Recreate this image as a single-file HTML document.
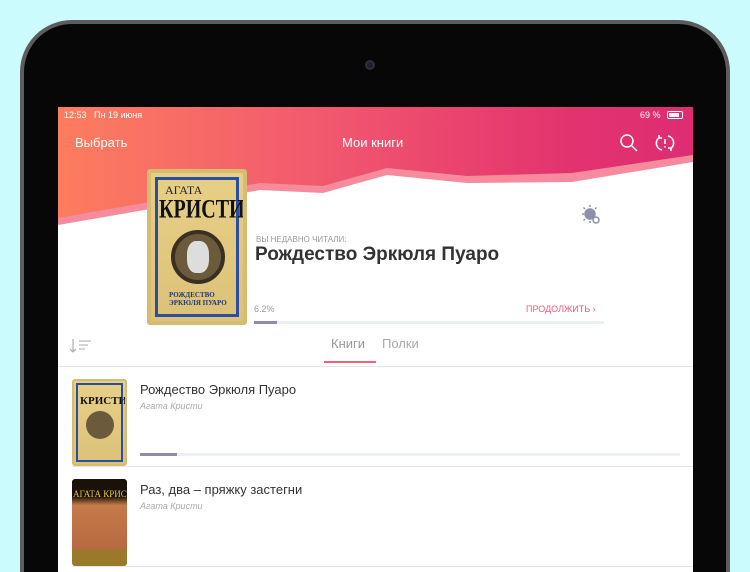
<!DOCTYPE html>
<html><head><meta charset="utf-8"><style>
*{margin:0;padding:0;box-sizing:border-box}
html,body{width:750px;height:572px;overflow:hidden}
body{background:#ccfbfd;font-family:"Liberation Sans","DejaVu Sans",sans-serif}
.wrap{position:relative;width:750px;height:572px;overflow:hidden;background:#ccfbfd}
.ipad{position:absolute;left:20px;top:20px;width:710px;height:552px;border-radius:52px 52px 0 0;background:#070707;border:4px solid #5c5c5e;border-bottom:none}
.cam{position:absolute;left:365px;top:60px;width:10px;height:10px;border-radius:50%;background:#1b2230;border:2px solid #2a2f3a}
.screen{position:absolute;left:58px;top:107px;width:635px;height:465px;background:#fff;overflow:hidden}
.grad{position:absolute;left:0;top:0;width:635px;height:130px;background:linear-gradient(90deg,#fd7d5e,#f25a6e 40%,#e3336f 80%,#de2d71)}
.t{position:absolute;white-space:nowrap}
.cover{position:absolute;background:linear-gradient(#e8cf86,#dcc279);border-radius:3px;overflow:hidden}
</style></head><body><div class="wrap">
<div class="ipad"></div>
<div class="cam"></div>
<div class="screen">
<div class="grad"></div>
<svg width="635" height="130" style="position:absolute;left:0;top:0">
<polygon points="0,111 202,76 265,79 329,61 409,69 514,66 635,48 635,130 0,130" fill="#f58b9c"/>
<polygon points="0,118 202,83 265,86 329,68 409,76 514,75 635,55 635,130 0,130" fill="#fff"/>
</svg>
<div class="t" style="left:6px;top:3px;font-size:9px;color:#fff">12:53&nbsp;&nbsp;&nbsp;Пн 19 июня</div>
<div class="t" style="left:582px;top:3px;font-size:9px;color:#fff">69 %</div>
<div style="position:absolute;left:609px;top:4px;width:16px;height:8px;border:1px solid #fff;border-radius:2px;padding:1px"><div style="width:10px;height:4px;background:#fff"></div></div>
<div class="t" style="left:17px;top:28px;font-size:13px;color:#fff">Выбрать</div>
<div class="t" style="left:284px;top:28px;font-size:13px;color:#fff">Мои книги</div>
<svg width="20" height="20" style="position:absolute;left:561px;top:26px" fill="none" stroke="#fff" stroke-width="1.5"><circle cx="8" cy="8" r="6"/><path d="M12.5 12.5L18 18"/></svg>
<svg width="20" height="20" style="position:absolute;left:597px;top:26px" fill="none" stroke="#fff" stroke-width="1.6"><path d="M5 4A7 7 0 0 0 7 17M15 16A7 7 0 0 0 13 3M4 2v3h3M16 18v-3h-3"/><path d="M10 6v5M10 13v1.5"/></svg>
<div class="cover" style="left:89px;top:62px;width:100px;height:156px;border:4px solid #d5bc72">
<div style="position:absolute;left:4px;top:4px;right:4px;bottom:4px;border:3px solid #2b4fa0"></div>
<div class="t" style="left:14px;top:10px;font-size:12px;color:#222;font-family:'Liberation Serif',serif">АГАТА</div>
<div class="t" style="left:8px;top:26px;font-size:20px;font-weight:bold;color:#111;font-family:'Liberation Serif',serif;transform:scaleY(1.3)">КРИСТИ</div>
<div style="position:absolute;left:20px;top:57px;width:54px;height:54px;border-radius:50%;background:#6b5a3c;border:4px solid #3a3022"></div>
<div style="position:absolute;left:36px;top:68px;width:22px;height:32px;border-radius:40%;background:#ddd"></div>
<div class="t" style="left:18px;top:118px;font-size:7px;font-weight:bold;color:#1c3a7a;font-family:'Liberation Serif',serif">РОЖДЕСТВО<br>ЭРКЮЛЯ ПУАРО</div>
</div>
<svg width="24" height="24" style="position:absolute;left:522px;top:96px" fill="#8e8fab" stroke="#8e8fab" stroke-width="1.5"><circle cx="10" cy="11" r="5"/><path d="M10 2v2M10 18v2M2 11h2M3.5 4.5l1.5 1.5M16.5 4.5l-1.5 1.5M3.5 17.5l1.5-1.5" fill="none"/><circle cx="16" cy="17" r="3" fill="#fff"/></svg>
<div class="t" style="left:198px;top:128px;font-size:8px;color:#999">ВЫ НЕДАВНО ЧИТАЛИ:</div>
<div class="t" style="left:197px;top:137px;font-size:19px;font-weight:bold;color:#333">Рождество Эркюля Пуаро</div>
<div class="t" style="left:196px;top:197px;font-size:9px;color:#999">6.2%</div>
<div class="t" style="left:468px;top:197px;font-size:9px;color:#ee5a78">ПРОДОЛЖИТЬ ›</div>
<div style="position:absolute;left:196px;top:214px;width:350px;height:3px;background:#edf0f3"><div style="width:23px;height:3px;background:#8e8cab"></div></div>
<svg width="26" height="16" style="position:absolute;left:11px;top:231px" fill="none" stroke="#aaa" stroke-width="1.1"><path d="M4 1v13M1 11l3 3 3-3M10 3h12M10 7h9M10 11h6"/></svg>
<div class="t" style="left:273px;top:229px;font-size:13px;color:#999">Книги</div>
<div class="t" style="left:324px;top:229px;font-size:13px;color:#aaa">Полки</div>
<div style="position:absolute;left:266px;top:254px;width:52px;height:2px;background:#f0617e"></div>
<div style="position:absolute;left:0;top:259px;width:635px;height:1px;background:#e6e6e6"></div>

<div class="cover" style="left:14px;top:272px;width:55px;height:87px;border:2px solid #d5bc72">
<div style="position:absolute;left:2px;top:2px;right:2px;bottom:2px;border:2px solid #2b4fa0"></div>
<div class="t" style="left:6px;top:14px;font-size:11px;font-weight:bold;color:#111;font-family:'Liberation Serif',serif">КРИСТИ</div>
<div style="position:absolute;left:12px;top:30px;width:28px;height:28px;border-radius:50%;background:#6b5a3c"></div>
</div>
<div class="t" style="left:82px;top:275px;font-size:13px;color:#333">Рождество Эркюля Пуаро</div>
<div class="t" style="left:82px;top:294px;font-size:9px;color:#aaa;font-style:italic">Агата Кристи</div>
<div style="position:absolute;left:82px;top:346px;width:540px;height:3px;background:#edf0f3"><div style="width:37px;height:3px;background:#8e8cab"></div></div>
<div style="position:absolute;left:14px;top:359px;width:621px;height:1px;background:#e6e6e6"></div>

<div class="cover" style="left:14px;top:372px;width:55px;height:87px;background:linear-gradient(#1a1208 0,#1a1208 20%,#c47a4a 30%,#b86a40 80%,#9a7a2a 82%)">
<div class="t" style="left:1px;top:10px;font-size:9px;color:#e4c430;font-family:'Liberation Serif',serif">АГАТА КРИСТИ</div>
</div>
<div class="t" style="left:82px;top:375px;font-size:13px;color:#333">Раз, два – пряжку застегни</div>
<div class="t" style="left:82px;top:394px;font-size:9px;color:#aaa;font-style:italic">Агата Кристи</div>
<div style="position:absolute;left:14px;top:459px;width:621px;height:1px;background:#e6e6e6"></div>
</div>
</div></body></html>
